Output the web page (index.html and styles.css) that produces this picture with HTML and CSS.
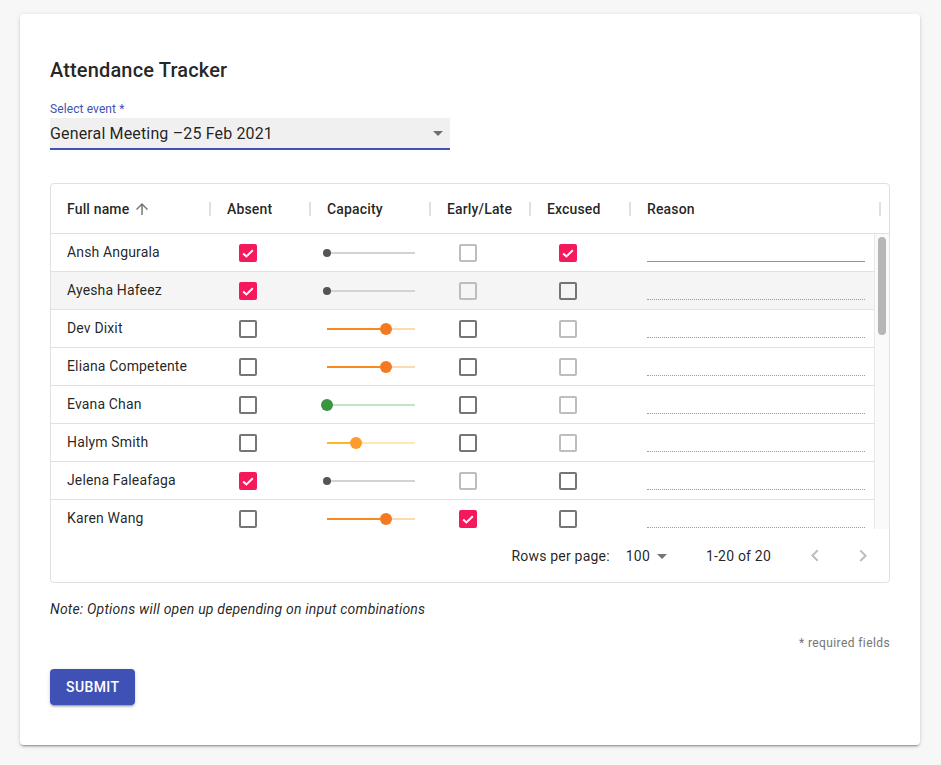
FILE: index.html
```html
<!DOCTYPE html>
<html lang="en">
<head>
<meta charset="utf-8">
<title>Attendance Tracker</title>
<link rel="stylesheet" href="styles.css">
</head>
<body>
<div class="page">
  <div class="card">
    <h1 class="title">Attendance Tracker</h1>
    <div class="field-label">Select event *</div>
    <div class="select">
      <span>General Meeting –25 Feb 2021</span>
      <svg class="drop-icon" viewBox="0 0 24 24" width="24" height="24"><path d="M7 10l5 5 5-5z"/></svg>
    </div>

    <div class="table">
      <div class="thead">
        <div class="th c-name"><span class="label">Full name<svg class="sort-icon" viewBox="0 0 24 24" width="18" height="18"><path d="M4 12l1.41 1.41L11 7.83V20h2V7.83l5.58 5.59L20 12l-8-8-8 8z"/></svg></span><span class="sep"></span></div>
        <div class="th c-abs"><span class="label">Absent</span><span class="sep"></span></div>
        <div class="th c-cap"><span class="label">Capacity</span><span class="sep"></span></div>
        <div class="th c-early"><span class="label">Early/Late</span><span class="sep"></span></div>
        <div class="th c-exc"><span class="label">Excused</span><span class="sep"></span></div>
        <div class="th c-reason"><span class="label">Reason</span><span class="sep"></span></div>
      </div>

      <div class="tbody">
        <div class="rows">
          <div class="row">
            <div class="td c-name">Ansh Angurala</div>
            <div class="td c-abs"><span class="cb checked"><svg viewBox="0 0 18 18" width="18" height="18"><polyline points="4.2,9.4 7.4,12.4 13.8,6.2"/></svg></span></div>
            <div class="td c-cap"><div class="slider disabled"><span class="track" style="width:0%"></span><span class="thumb"></span><span class="rail"></span></div></div>
            <div class="td c-early"><span class="cb disabled"></span></div>
            <div class="td c-exc"><span class="cb checked"><svg viewBox="0 0 18 18" width="18" height="18"><polyline points="4.2,9.4 7.4,12.4 13.8,6.2"/></svg></span></div>
            <div class="td c-reason"><span class="line"></span></div>
          </div>
          <div class="row hover">
            <div class="td c-name">Ayesha Hafeez</div>
            <div class="td c-abs"><span class="cb checked"><svg viewBox="0 0 18 18" width="18" height="18"><polyline points="4.2,9.4 7.4,12.4 13.8,6.2"/></svg></span></div>
            <div class="td c-cap"><div class="slider disabled"><span class="track" style="width:0%"></span><span class="thumb"></span><span class="rail"></span></div></div>
            <div class="td c-early"><span class="cb disabled"></span></div>
            <div class="td c-exc"><span class="cb"></span></div>
            <div class="td c-reason"><span class="line disabled"></span></div>
          </div>
          <div class="row">
            <div class="td c-name">Dev Dixit</div>
            <div class="td c-abs"><span class="cb"></span></div>
            <div class="td c-cap"><div class="slider orange"><span class="track" style="width:66.7%"></span><span class="thumb"></span><span class="rail"></span></div></div>
            <div class="td c-early"><span class="cb"></span></div>
            <div class="td c-exc"><span class="cb disabled"></span></div>
            <div class="td c-reason"><span class="line disabled"></span></div>
          </div>
          <div class="row">
            <div class="td c-name">Eliana Competente</div>
            <div class="td c-abs"><span class="cb"></span></div>
            <div class="td c-cap"><div class="slider orange"><span class="track" style="width:66.7%"></span><span class="thumb"></span><span class="rail"></span></div></div>
            <div class="td c-early"><span class="cb"></span></div>
            <div class="td c-exc"><span class="cb disabled"></span></div>
            <div class="td c-reason"><span class="line disabled"></span></div>
          </div>
          <div class="row">
            <div class="td c-name">Evana Chan</div>
            <div class="td c-abs"><span class="cb"></span></div>
            <div class="td c-cap"><div class="slider green"><span class="track" style="width:0%"></span><span class="thumb"></span><span class="rail"></span></div></div>
            <div class="td c-early"><span class="cb"></span></div>
            <div class="td c-exc"><span class="cb disabled"></span></div>
            <div class="td c-reason"><span class="line disabled"></span></div>
          </div>
          <div class="row">
            <div class="td c-name">Halym Smith</div>
            <div class="td c-abs"><span class="cb"></span></div>
            <div class="td c-cap"><div class="slider amber"><span class="track" style="width:33.3%"></span><span class="thumb"></span><span class="rail"></span></div></div>
            <div class="td c-early"><span class="cb"></span></div>
            <div class="td c-exc"><span class="cb disabled"></span></div>
            <div class="td c-reason"><span class="line disabled"></span></div>
          </div>
          <div class="row">
            <div class="td c-name">Jelena Faleafaga</div>
            <div class="td c-abs"><span class="cb checked"><svg viewBox="0 0 18 18" width="18" height="18"><polyline points="4.2,9.4 7.4,12.4 13.8,6.2"/></svg></span></div>
            <div class="td c-cap"><div class="slider disabled"><span class="track" style="width:0%"></span><span class="thumb"></span><span class="rail"></span></div></div>
            <div class="td c-early"><span class="cb disabled"></span></div>
            <div class="td c-exc"><span class="cb"></span></div>
            <div class="td c-reason"><span class="line disabled"></span></div>
          </div>
          <div class="row">
            <div class="td c-name">Karen Wang</div>
            <div class="td c-abs"><span class="cb"></span></div>
            <div class="td c-cap"><div class="slider orange"><span class="track" style="width:66.7%"></span><span class="thumb"></span><span class="rail"></span></div></div>
            <div class="td c-early"><span class="cb checked"><svg viewBox="0 0 18 18" width="18" height="18"><polyline points="4.2,9.4 7.4,12.4 13.8,6.2"/></svg></span></div>
            <div class="td c-exc"><span class="cb"></span></div>
            <div class="td c-reason"><span class="line disabled"></span></div>
          </div>
        </div>
        <div class="scrollbar"><div class="scroll-thumb"></div></div>
      </div>

      <div class="tfoot">
        <span class="rpp-label">Rows per page:</span>
        <span class="rpp-select">100<svg class="drop-icon" viewBox="0 0 24 24" width="24" height="24"><path d="M7 10l5 5 5-5z"/></svg></span>
        <span class="displayed">1-20 of 20</span>
        <span class="actions">
          <span class="icon-btn"><svg viewBox="0 0 24 24" width="24" height="24"><path d="M15.41 16.09l-4.58-4.59 4.58-4.59L14 5.5l-6 6 6 6z"/></svg></span>
          <span class="icon-btn"><svg viewBox="0 0 24 24" width="24" height="24"><path d="M8.59 16.34l4.58-4.59-4.58-4.59L10 5.75l6 6-6 6z"/></svg></span>
        </span>
      </div>
    </div>

    <p class="note">Note: Options will open up depending on input combinations</p>
    <div class="required">* required fields</div>
    <button class="submit">Submit</button>
  </div>
</div>
</body>
</html>
```

FILE: styles.css
```css
* { box-sizing: border-box; }

body {
  margin: 0;
  background: #f7f7f7;
  font-family: Roboto, "Liberation Sans", Arial, sans-serif;
  color: rgba(0, 0, 0, 0.87);
}

.page {
  padding: 14px 21px 20px 20px;
}

.card {
  background: #fff;
  border-radius: 4px;
  box-shadow: 0 3px 1px -2px rgba(0,0,0,.2), 0 2px 2px 0 rgba(0,0,0,.14), 0 1px 5px 0 rgba(0,0,0,.12);
  padding: 40px 30px 40px;
}

.title {
  margin: 0;
  font-size: 20px;
  font-weight: 500;
  line-height: 32px;
  letter-spacing: 0.15px;
}

.field-label {
  margin-top: 15px;
  font-size: 12px;
  line-height: 16px;
  color: #3f51b5;
  letter-spacing: 0.1px;
}

.select {
  margin-top: 1px;
  width: 400px;
  height: 32px;
  background: #f0f0f0;
  border-bottom: 2px solid #3f51b5;
  display: flex;
  align-items: center;
  justify-content: space-between;
  font-size: 16px;
  line-height: 30px;
  letter-spacing: 0.15px;
}

.select span { padding-top: 1px; }

.drop-icon { fill: rgba(0, 0, 0, 0.54); flex-shrink: 0; }

/* table */
.table {
  margin-top: 33px;
  border: 1px solid #e0e0e0;
  border-radius: 4px;
  overflow: hidden;
}

.thead {
  display: flex;
  height: 50px;
  border-bottom: 1px solid #e0e0e0;
}

.th {
  display: flex;
  align-items: center;
  padding-left: 16px;
  font-size: 14px;
  font-weight: 500;
  letter-spacing: 0.15px;
  flex-shrink: 0;
}

.th .label {
  flex: 1;
  display: flex;
  align-items: center;
}

.sort-icon {
  margin-left: 4px;
  fill: rgba(0, 0, 0, 0.54);
}

.sep {
  width: 2px;
  height: 14px;
  background: #e0e0e0;
}

.c-name { width: 160px; }
.c-abs { width: 100px; }
.c-cap { width: 120px; }
.c-early { width: 100px; }
.c-exc { width: 100px; }
.c-reason { width: 250px; }

.tbody {
  display: flex;
  height: 295px;
}

.rows {
  flex: 1;
  min-width: 0;
  overflow: hidden;
}

.row {
  display: flex;
  align-items: center;
  width: 830px;
  height: 38px;
  border-bottom: 1px solid #e0e0e0;
}

.row.hover { background: #f5f5f5; }

.td {
  padding-left: 16px;
  font-size: 14px;
  letter-spacing: 0.15px;
  flex-shrink: 0;
}

.td.c-name { padding-bottom: 1px; }

/* checkbox */
.cb {
  display: block;
  margin-left: 12px;
  width: 18px;
  height: 18px;
  border: 2px solid #757575;
  border-radius: 2px;
}

.cb.disabled { border-color: #bdbdbd; }

.cb.checked {
  border: none;
  background: #f5185a;
}

.cb.checked svg {
  display: block;
  fill: none;
  stroke: #fff;
  stroke-width: 2;
}

/* slider */
.slider {
  display: flex;
  align-items: center;
  width: 88px;
  height: 12px;
}

.slider .track,
.slider .rail { height: 2px; }

.slider .rail { flex: 1; }

.slider .thumb {
  position: relative;
  z-index: 1;
  flex-shrink: 0;
  width: 12px;
  height: 12px;
  margin: 0 -6px;
  border-radius: 50%;
}

.slider.disabled .thumb {
  width: 8px;
  height: 8px;
  margin: 0 -4px;
  background: #555;
}
.slider.disabled .rail { background: #d3d3d3; }

.slider.orange .track { background: #f7891f; }
.slider.orange .thumb { background: #f47a22; }
.slider.orange .rail { background: #fed9b5; }

.slider.amber .track { background: #fbb82b; }
.slider.amber .thumb { background: #fd9c2b; }
.slider.amber .rail { background: #feeab2; }

.slider.green .track { background: #3a9540; }
.slider.green .thumb { background: #3a9540; }
.slider.green .rail { background: #c3e3c5; }

/* reason */
.td.c-reason {
  align-self: stretch;
  display: flex;
  align-items: flex-end;
  padding: 0 16px 9px;
}

.line {
  flex: 1;
  border-bottom: 1px solid #949494;
}

.line.disabled { border-bottom-style: dotted; border-bottom-color: #9a9a9a; }

/* scrollbar */
.scrollbar {
  width: 15px;
  flex-shrink: 0;
  background: #fafafa;
  border-left: 1px solid #e8e8e8;
  padding: 3px 0 0 3px;
}

.scroll-thumb {
  width: 8px;
  height: 98px;
  background: #b6b6b6;
  border-radius: 4px;
}

/* footer */
.tfoot {
  height: 53px;
  display: flex;
  align-items: center;
  justify-content: flex-end;
  padding-right: 2px;
  font-size: 14px;
  letter-spacing: 0.2px;
}

.rpp-select {
  display: flex;
  align-items: center;
  margin-left: 8px;
  margin-right: 32px;
  padding-left: 8px;
}

.actions {
  display: flex;
  margin-left: 20px;
}

.icon-btn {
  display: block;
  width: 48px;
  height: 48px;
  padding: 12px;
}

.icon-btn svg {
  display: block;
  fill: rgba(0, 0, 0, 0.26);
}

/* bottom */
.note {
  margin: 16px 0 0;
  font-size: 14px;
  line-height: 20px;
  font-style: italic;
  letter-spacing: 0.2px;
}

.required {
  margin-top: 16px;
  text-align: right;
  font-size: 12px;
  line-height: 16px;
  color: #757575;
  letter-spacing: 0.4px;
}

.submit {
  display: block;
  margin-top: 18px;
  height: 36px;
  padding: 0 16px;
  background: #3f51b5;
  color: #fff;
  border: none;
  border-radius: 4px;
  font-family: Roboto, "Liberation Sans", Arial, sans-serif;
  font-size: 14px;
  font-weight: 500;
  letter-spacing: 0.4px;
  text-transform: uppercase;
  box-shadow: 0 3px 1px -2px rgba(0,0,0,.2), 0 2px 2px 0 rgba(0,0,0,.14), 0 1px 5px 0 rgba(0,0,0,.12);
}
```
